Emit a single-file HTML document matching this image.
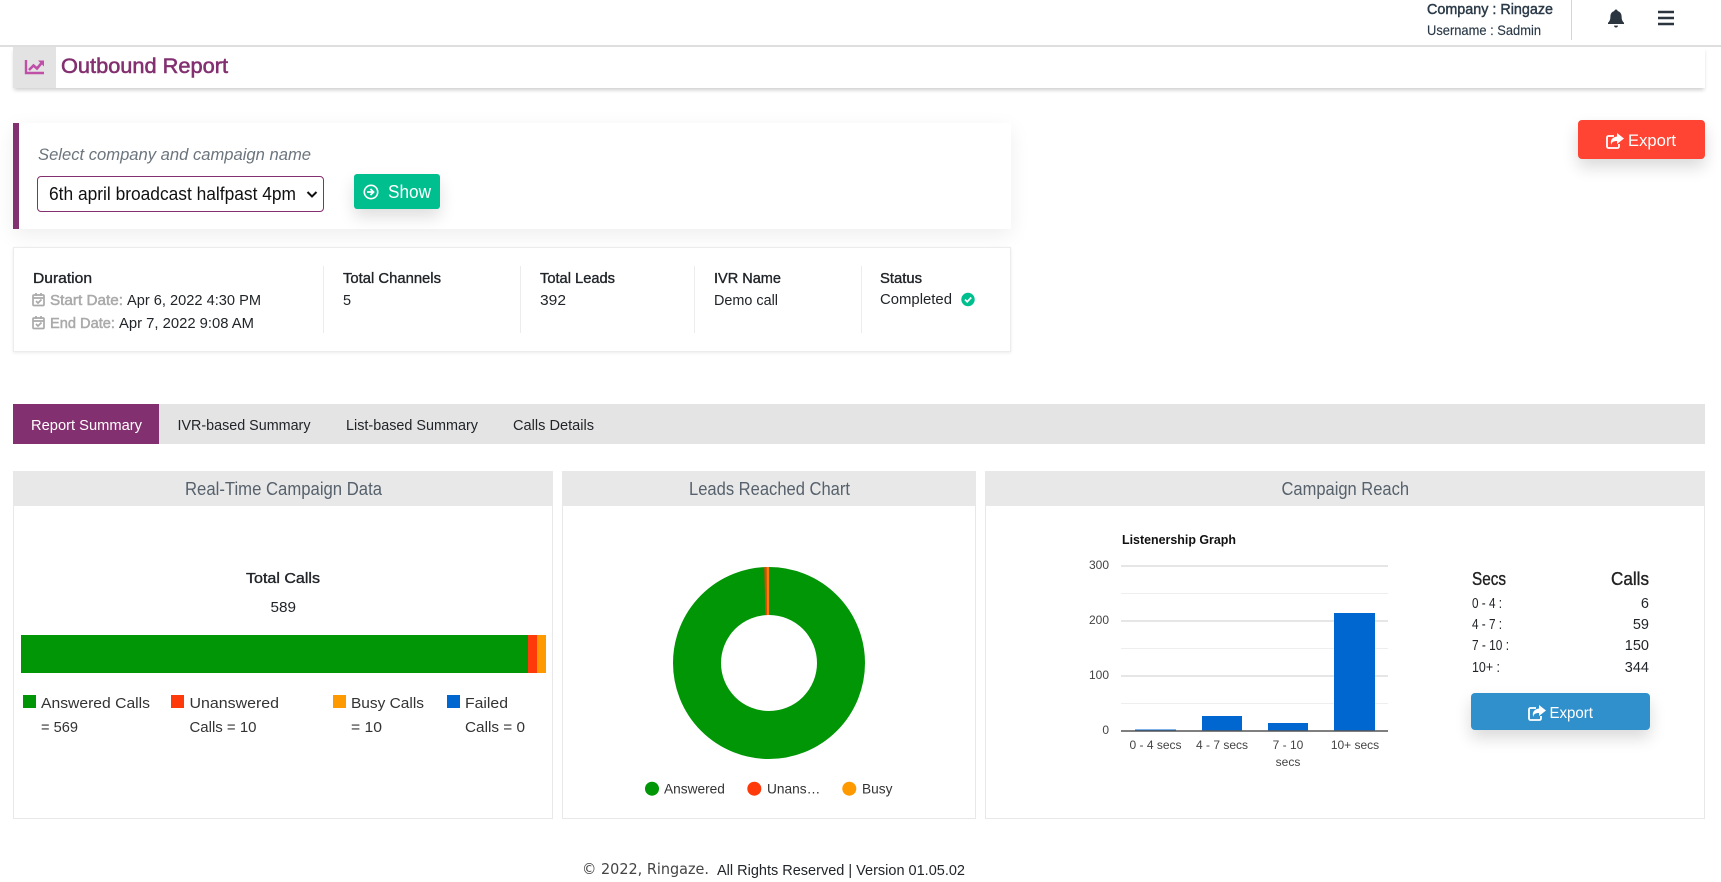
<!DOCTYPE html>
<html lang="en">
<head>
<meta charset="utf-8">
<title>Outbound Report</title>
<style>
html,body{margin:0;padding:0;background:#fff;width:1721px;height:882px;overflow:hidden;font-family:"Liberation Sans",sans-serif}
.b{position:absolute;box-sizing:border-box}
svg{position:absolute;left:0;top:0}
text{font-family:"Liberation Sans",sans-serif;fill:#212529}
.m{stroke:#212529;stroke-width:.35}
.h{font-size:18px;fill:#56616c}
.t{font-size:14.5px}
.l{font-size:15px;fill:#333}
.c{font-size:12px;fill:#444}
.d{font-size:13.7px;fill:#333}
</style>
</head>
<body>
<div class="b" style="left:13px;top:47px;width:1692px;height:41px;background:#fff;box-shadow:0 3px 4px -1px rgba(0,0,0,.2)"></div>
<div class="b" style="left:13px;top:47px;width:43px;height:41px;background:#e3e3e3"></div>
<div class="b" style="left:0;top:45px;width:1721px;height:2px;background:#dedede"></div>
<div class="b" style="left:1571px;top:0;width:1px;height:40px;background:#d5d5d5"></div>

<div class="b" style="left:13px;top:123px;width:998px;height:106px;background:#fff;border-left:6px solid #833070;box-shadow:0 6px 20px rgba(0,0,0,.07)"></div>
<div class="b" style="left:37px;top:176px;width:287px;height:36px;background:#fff;border:1px solid #833070;border-radius:4px"></div>
<div class="b" style="left:354px;top:174px;width:86px;height:35px;background:#00bf8f;border-radius:3px;box-shadow:0 8px 16px rgba(0,0,0,.13)"></div>
<div class="b" style="left:1578px;top:120px;width:127px;height:39px;background:#ff4433;border-radius:4px;box-shadow:0 8px 16px rgba(0,0,0,.15)"></div>

<div class="b" style="left:13px;top:247px;width:998px;height:105px;background:#fff;border:1px solid #ececec;box-shadow:0 1px 3px rgba(0,0,0,.08)"></div>
<div class="b" style="left:323px;top:266px;width:1px;height:67px;background:#ececec"></div>
<div class="b" style="left:520px;top:266px;width:1px;height:67px;background:#ececec"></div>
<div class="b" style="left:694px;top:266px;width:1px;height:67px;background:#ececec"></div>
<div class="b" style="left:861px;top:266px;width:1px;height:67px;background:#ececec"></div>

<div class="b" style="left:13px;top:404px;width:1692px;height:40px;background:#e4e4e4"></div>
<div class="b" style="left:13px;top:404px;width:146px;height:40px;background:#833070"></div>

<div class="b" style="left:13px;top:471px;width:540px;height:348px;border:1px solid #e8e8e8"></div>
<div class="b" style="left:13px;top:471px;width:540px;height:35px;background:#e8e8e8"></div>
<div class="b" style="left:562px;top:471px;width:414px;height:348px;border:1px solid #e8e8e8"></div>
<div class="b" style="left:562px;top:471px;width:414px;height:35px;background:#e8e8e8"></div>
<div class="b" style="left:985px;top:471px;width:720px;height:348px;border:1px solid #e8e8e8"></div>
<div class="b" style="left:985px;top:471px;width:720px;height:35px;background:#e8e8e8"></div>

<div class="b" style="left:21px;top:635px;width:507px;height:38px;background:#009605"></div>
<div class="b" style="left:528px;top:635px;width:9px;height:38px;background:#ff3a0a"></div>
<div class="b" style="left:537px;top:635px;width:9px;height:38px;background:#ff9900"></div>
<div class="b" style="left:23px;top:695px;width:13px;height:13px;background:#009605"></div>
<div class="b" style="left:171px;top:695px;width:13px;height:13px;background:#ff3a0a"></div>
<div class="b" style="left:333px;top:695px;width:13px;height:13px;background:#ff9900"></div>
<div class="b" style="left:447px;top:695px;width:13px;height:13px;background:#0066d0"></div>

<div class="b" style="left:1471px;top:693px;width:179px;height:37px;background:#3090cc;border-radius:4px;box-shadow:0 8px 16px rgba(0,0,0,.15)"></div>

<svg width="1721" height="882" viewBox="0 0 1721 882" xmlns="http://www.w3.org/2000/svg">
<!-- top bar -->
<text x="1427" y="14" font-size="15" style="fill:#2b3a48;stroke:#2b3a48;stroke-width:.45" textLength="126" lengthAdjust="spacingAndGlyphs">Company : Ringaze</text>
<text x="1427" y="35" font-size="14" style="fill:#2b3a48;stroke:#2b3a48;stroke-width:.15" textLength="114" lengthAdjust="spacingAndGlyphs">Username : Sadmin</text>
<path d="M1616 9.5c-1 0-1.6.7-1.6 1.5-2.6.7-4 2.9-4 5.4 0 3.6-1 5-2.4 6.4v1.2h16v-1.2c-1.4-1.4-2.4-2.8-2.4-6.4 0-2.5-1.4-4.7-4-5.4 0-.8-.6-1.5-1.6-1.5zM1614 25.6h4c0 1.1-.9 1.9-2 1.9s-2-.8-2-1.9z" fill="#2a3540"/>
<path d="M1658 12h16M1658 18h16M1658 24h16" stroke="#2a3540" stroke-width="2.6" fill="none"/>

<!-- title -->
<path d="M26 60v13h18" fill="none" stroke="#c04fa8" stroke-width="2.4"/>
<path d="M29 70l4.500-4.500 3.500 3 5-6" fill="none" stroke="#c04fa8" stroke-width="2.600"/>
<path d="M38 60.500h6v6z" fill="#c04fa8"/>
<text x="61" y="73" font-size="21" style="fill:#833070;stroke:#833070;stroke-width:.55" textLength="167" lengthAdjust="spacingAndGlyphs">Outbound Report</text>

<!-- select card -->
<text x="38" y="160" font-size="17" font-style="italic" style="fill:#6c757d" textLength="273" lengthAdjust="spacingAndGlyphs">Select company and campaign name</text>
<text x="49" y="200" font-size="18" style="fill:#111" textLength="247" lengthAdjust="spacingAndGlyphs">6th april broadcast halfpast 4pm</text>
<path d="M307.500 192l4.500 4.500 4.500-4.500" fill="none" stroke="#111" stroke-width="2"/>
<circle cx="371" cy="192" r="6.700" fill="none" stroke="#fff" stroke-width="1.600"/>
<path d="M367 192h6M370.500 189l3 3-3 3" fill="none" stroke="#fff" stroke-width="1.800"/>
<text x="388" y="198" font-size="18" style="fill:#fff" textLength="43" lengthAdjust="spacingAndGlyphs">Show</text>

<!-- export top -->
<g transform="translate(1606 133)">
<path d="M8 3H2.500A1.500 1.500 0 0 0 1 4.500v9A1.500 1.500 0 0 0 2.500 15h9a1.500 1.500 0 0 0 1.500-1.500V11" fill="none" stroke="#fff" stroke-width="1.800"/>
<path d="M11 0l7 5.500-7 5.500V8C7.500 8 5.500 9 5.500 12 3.500 8 6 4 11 3.500z" fill="#fff"/>
</g>
<text x="1628" y="146" font-size="16.500" style="fill:#fff" textLength="48" lengthAdjust="spacingAndGlyphs">Export</text>

<!-- info card -->
<text x="33" y="283" class="t m" textLength="59" lengthAdjust="spacingAndGlyphs">Duration</text>
<g fill="none" stroke="#aaa" stroke-width="1.700">
<rect x="33" y="295" width="11" height="10.500" rx="1"/><path d="M33 298h11M36 293v3M41 293v3M36 301l2 2 3.500-3.500"/>
<rect x="33" y="318" width="11" height="10.500" rx="1"/><path d="M33 321h11M36 316v3M41 316v3M36 324l2 2 3.500-3.500"/>
</g>
<text x="50" y="305" class="t" style="fill:#aaa;stroke:#aaa;stroke-width:.5" textLength="73" lengthAdjust="spacingAndGlyphs">Start Date:</text>
<text x="127" y="305" class="t" textLength="134" lengthAdjust="spacingAndGlyphs">Apr 6, 2022 4:30 PM</text>
<text x="50" y="328" class="t" style="fill:#aaa;stroke:#aaa;stroke-width:.5" textLength="65" lengthAdjust="spacingAndGlyphs">End Date:</text>
<text x="119" y="328" class="t" textLength="135" lengthAdjust="spacingAndGlyphs">Apr 7, 2022 9:08 AM</text>
<text x="343" y="283" class="t m" textLength="98" lengthAdjust="spacingAndGlyphs">Total Channels</text>
<text x="343" y="305" class="t">5</text>
<text x="540" y="283" class="t m" textLength="75" lengthAdjust="spacingAndGlyphs">Total Leads</text>
<text x="540" y="305" class="t" textLength="26" lengthAdjust="spacingAndGlyphs">392</text>
<text x="714" y="283" class="t m" textLength="67" lengthAdjust="spacingAndGlyphs">IVR Name</text>
<text x="714" y="305" class="t" textLength="64" lengthAdjust="spacingAndGlyphs">Demo call</text>
<text x="880" y="283" class="t m" textLength="42" lengthAdjust="spacingAndGlyphs">Status</text>
<text x="880" y="304" class="t" textLength="72" lengthAdjust="spacingAndGlyphs">Completed</text>
<circle cx="968" cy="299.500" r="6.700" fill="#00bf8f"/>
<path d="M965 299.500l2.200 2.300 4-4.300" fill="none" stroke="#fff" stroke-width="1.700"/>

<!-- tabs -->
<text x="31" y="430" class="t" style="fill:#fff" textLength="111" lengthAdjust="spacingAndGlyphs">Report Summary</text>
<text x="177.500" y="430" class="t" textLength="133" lengthAdjust="spacingAndGlyphs">IVR-based Summary</text>
<text x="346" y="430" class="t" textLength="132" lengthAdjust="spacingAndGlyphs">List-based Summary</text>
<text x="513" y="430" class="t" textLength="81" lengthAdjust="spacingAndGlyphs">Calls Details</text>

<!-- panel headings -->
<text x="185" y="495" class="h" textLength="197" lengthAdjust="spacingAndGlyphs">Real-Time Campaign Data</text>
<text x="689" y="495" class="h" textLength="161" lengthAdjust="spacingAndGlyphs">Leads Reached Chart</text>
<text x="1281.500" y="495" class="h" textLength="127.500" lengthAdjust="spacingAndGlyphs">Campaign Reach</text>

<!-- panel 1 -->
<text x="246" y="583" class="t m" textLength="74" lengthAdjust="spacingAndGlyphs">Total Calls</text>
<text x="270.500" y="612" class="t" textLength="25.500" lengthAdjust="spacingAndGlyphs">589</text>
<text x="41" y="708" class="l" textLength="109" lengthAdjust="spacingAndGlyphs">Answered Calls</text>
<text x="41" y="732" class="l" textLength="37" lengthAdjust="spacingAndGlyphs">= 569</text>
<text x="189.500" y="708" class="l" textLength="89.500" lengthAdjust="spacingAndGlyphs">Unanswered</text>
<text x="189.500" y="732" class="l" textLength="67" lengthAdjust="spacingAndGlyphs">Calls = 10</text>
<text x="351" y="708" class="l" textLength="73" lengthAdjust="spacingAndGlyphs">Busy Calls</text>
<text x="351" y="732" class="l" textLength="31" lengthAdjust="spacingAndGlyphs">= 10</text>
<text x="465" y="708" class="l" textLength="43" lengthAdjust="spacingAndGlyphs">Failed</text>
<text x="465" y="732" class="l" textLength="60" lengthAdjust="spacingAndGlyphs">Calls = 0</text>

<!-- donut -->
<circle cx="769" cy="663" r="72" fill="none" stroke="#009605" stroke-width="48"/>
<path d="M764.300 567.100L766.600 567 766.900 615 765.400 615.100z" fill="#e8420a"/>
<path d="M766.600 567L769 567V615H766.900z" fill="#ff7a00"/>
<circle cx="652" cy="788.700" r="7" fill="#009605"/>
<text x="664" y="793.500" class="d">Answered</text>
<circle cx="754.300" cy="788.700" r="7" fill="#ff3a0a"/>
<text x="767" y="793.500" class="d">Unans…</text>
<circle cx="849.300" cy="788.700" r="7" fill="#ff9900"/>
<text x="862" y="793.500" class="d">Busy</text>

<!-- bar chart -->
<text x="1122" y="544" font-size="12.500" font-weight="bold" style="fill:#111" textLength="114" lengthAdjust="spacingAndGlyphs">Listenership Graph</text>
<path d="M1121 566h267M1121 621h267M1121 676h267" stroke="#ddd" stroke-width="1.500"/>
<path d="M1121 593.500h267M1121 648.500h267M1121 703.500h267" stroke="#eee" stroke-width="1"/>
<text x="1109" y="569" class="c" text-anchor="end">300</text>
<text x="1109" y="624" class="c" text-anchor="end">200</text>
<text x="1109" y="679" class="c" text-anchor="end">100</text>
<text x="1109" y="734" class="c" text-anchor="end">0</text>
<rect x="1135" y="729.500" width="41" height="1.500" fill="#0066d0"/>
<rect x="1202" y="716" width="40" height="15" fill="#0066d0"/>
<rect x="1268" y="723" width="40" height="8" fill="#0066d0"/>
<rect x="1334" y="613" width="41" height="118" fill="#0066d0"/>
<path d="M1121 731h267" stroke="#555" stroke-width="1.500"/>
<text x="1155.500" y="749" class="c" text-anchor="middle">0 - 4 secs</text>
<text x="1222" y="749" class="c" text-anchor="middle">4 - 7 secs</text>
<text x="1288" y="749" class="c" text-anchor="middle">7 - 10</text>
<text x="1288" y="766" class="c" text-anchor="middle">secs</text>
<text x="1355" y="749" class="c" text-anchor="middle">10+ secs</text>

<!-- table -->
<text x="1472" y="585" font-size="18" style="fill:#222;stroke:#222;stroke-width:.35" textLength="34" lengthAdjust="spacingAndGlyphs">Secs</text>
<text x="1611" y="585" font-size="18" style="fill:#222;stroke:#222;stroke-width:.35" textLength="38" lengthAdjust="spacingAndGlyphs">Calls</text>
<text x="1472" y="608" class="t" textLength="30" lengthAdjust="spacingAndGlyphs">0 - 4 :</text>
<text x="1472" y="629" class="t" textLength="30" lengthAdjust="spacingAndGlyphs">4 - 7 :</text>
<text x="1472" y="650" class="t" textLength="37" lengthAdjust="spacingAndGlyphs">7 - 10 :</text>
<text x="1472" y="672" class="t" textLength="28" lengthAdjust="spacingAndGlyphs">10+ :</text>
<text x="1649" y="608" class="t" text-anchor="end">6</text>
<text x="1649" y="629" class="t" text-anchor="end">59</text>
<text x="1649" y="650" class="t" text-anchor="end">150</text>
<text x="1649" y="672" class="t" text-anchor="end">344</text>
<g transform="translate(1528 705)">
<path d="M8 3H2.500A1.500 1.500 0 0 0 1 4.500v9A1.500 1.500 0 0 0 2.500 15h9a1.500 1.500 0 0 0 1.500-1.500V11" fill="none" stroke="#fff" stroke-width="1.800"/>
<path d="M11 0l7 5.500-7 5.500V8C7.500 8 5.500 9 5.500 12 3.500 8 6 4 11 3.500z" fill="#fff"/>
</g>
<text x="1549.500" y="718" font-size="16" style="fill:#fff" textLength="43.500" lengthAdjust="spacingAndGlyphs">Export</text>

<!-- footer -->
<text x="582" y="874" font-size="15.500" style="font-family:'DejaVu Sans',sans-serif;fill:#444" textLength="127" lengthAdjust="spacingAndGlyphs">© 2022, Ringaze.</text>
<text x="717" y="875" font-size="14.500" textLength="248" lengthAdjust="spacingAndGlyphs">All Rights Reserved | Version 01.05.02</text>
</svg>
</body>
</html>
